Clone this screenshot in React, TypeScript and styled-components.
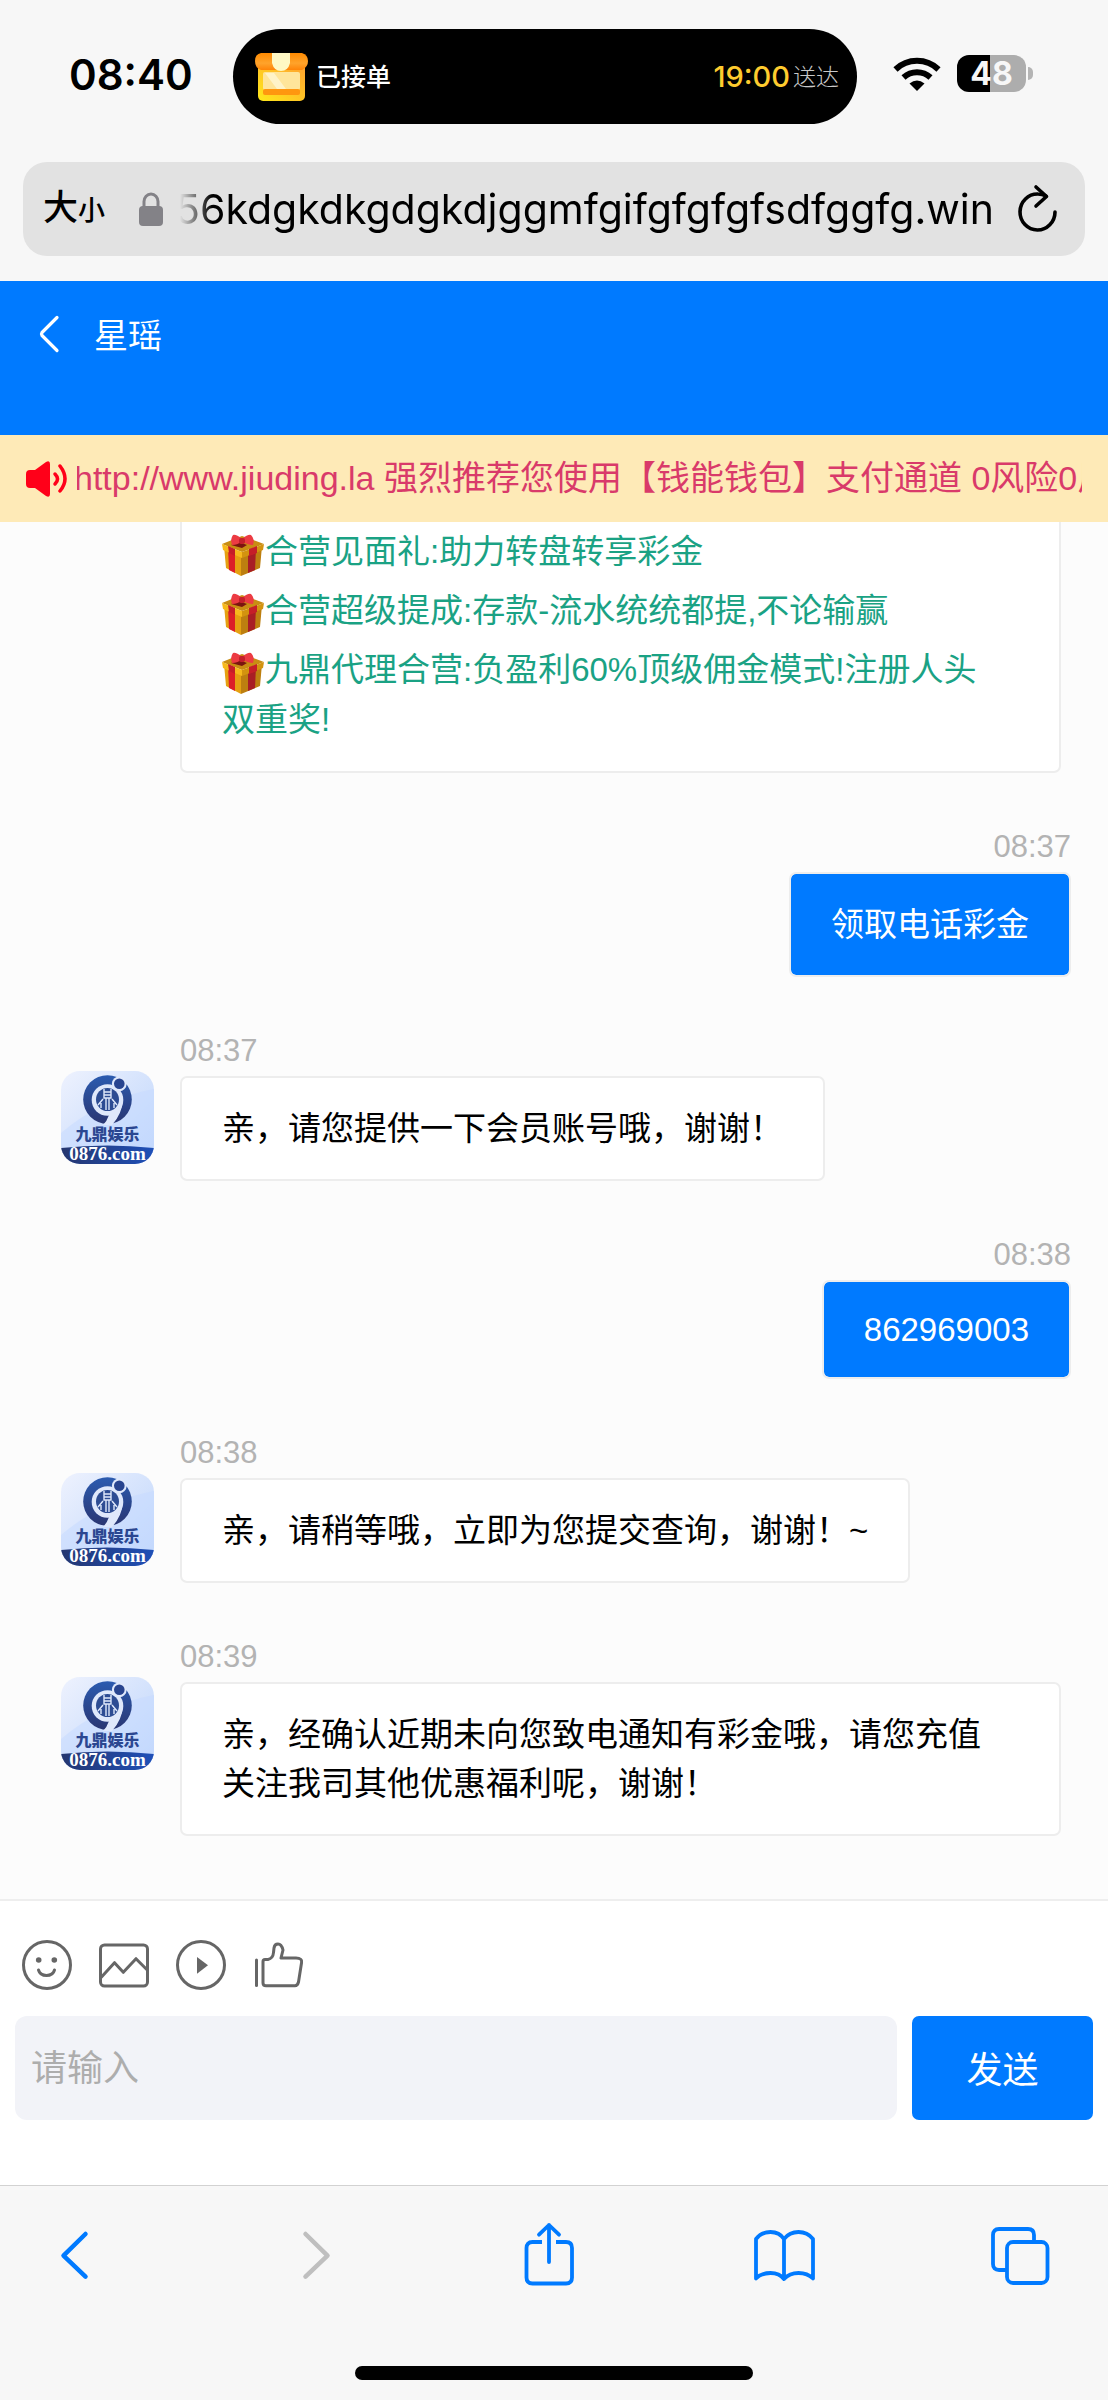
import React from "react";
import styled, { createGlobalStyle } from "styled-components";

const SYSTEM_FONT = `Inter, "Noto Sans CJK SC", sans-serif`;
const CHAT_FONT = `"Liberation Sans", "Noto Sans CJK SC", sans-serif`;
const BLUE = "#007aff";

const GlobalStyle = createGlobalStyle`
  *, *::before, *::after { box-sizing: border-box; }
  body { margin: 0; background: #f7f7f7; font-family: ${CHAT_FONT}; }
  button, input { font: inherit; }
  p { margin: 0; }
`;

const Shell = styled.div`
  display: flex;
  flex-direction: column;
  height: 100vh;
  overflow: hidden;
`;

const BareButton = styled.button`
  display: flex;
  align-items: center;
  padding: 0;
  border: 0;
  background: none;
  color: inherit;
  cursor: pointer;
`;

/* ---------- system chrome ---------- */

const StatusBar = styled.header`
  display: grid;
  grid-template-columns: 233px 1fr 251px;
  align-items: center;
  padding-top: 29px;
  font-family: ${SYSTEM_FONT};
`;

const Clock = styled.time`
  padding: 0 0 3px 69px;
  font-size: 42px;
  font-weight: 600;
  line-height: 48px;
`;

const Island = styled.div`
  display: flex;
  align-items: center;
  height: 95px;
  padding: 0 18px 0 22px;
  border-radius: 48px;
  background: #000;
  color: #fff;
`;

const OrderState = styled.span`
  flex: 1;
  padding-left: 8px;
  font-size: 25px;
  font-weight: 500;
  line-height: 32px;
`;

const Eta = styled.span`
  color: #fecb2e;
  font-size: 29px;
  font-weight: 500;
  line-height: 32px;
`;

const EtaUnit = styled.span`
  padding-left: 3px;
  color: #c8c8c8;
  font-size: 23px;
  font-weight: 300;
  line-height: 32px;
`;

const Indicators = styled.div`
  display: flex;
  align-items: center;
  gap: 16px;
  padding: 0 0 6px 36px;
`;

const BatteryRow = styled.div`
  display: flex;
  align-items: center;
  gap: 2px;
`;

const Battery = styled.div`
  width: 69px;
  height: 37px;
  border-radius: 12px;
  background: linear-gradient(90deg, #000 48%, #adadad 48%);
  color: #f7f7f7;
  font-size: 32px;
  font-weight: 700;
  line-height: 38px;
  text-align: center;
`;

const BatteryCap = styled.div`
  width: 5px;
  height: 13px;
  border-radius: 0 6px 6px 0;
  background: #b4b4b4;
`;

const AddressBar = styled.div`
  display: flex;
  align-items: center;
  height: 94px;
  margin: 38px 23px 25px;
  padding: 0 27px 0 20px;
  border-radius: 24px;
  background: #e2e2e2;
  font-family: ${SYSTEM_FONT};
`;

const TextSize = styled(BareButton)`
  align-items: baseline;
  font-size: 35px;
  font-weight: 500;
  line-height: 48px;

  small {
    font-size: 27px;
  }
`;

const LockIcon = styled.svg`
  flex: none;
  margin: 0 17px 0 34px;
`;

const Address = styled.div`
  display: flex;
  flex: 1;
  justify-content: flex-end;
  min-width: 0;
  overflow: hidden;
  font-size: 41px;
  line-height: 56px;
  white-space: nowrap;
  mask-image: linear-gradient(90deg, transparent, #000 32px);
`;

const Reload = styled(BareButton)`
  margin-left: 24px;
  padding-bottom: 3px;
`;

/* ---------- chat header ---------- */

const ChatHeader = styled.header`
  display: flex;
  align-items: flex-start;
  gap: 34px;
  flex: none;
  height: 154px;
  padding: 29px 38px;
  background: ${BLUE};
  color: #fff;
`;

const BackButton = styled(BareButton)`
  height: 48px;
`;

const Agent = styled.h1`
  margin: 0;
  font-size: 34px;
  font-weight: 400;
  line-height: 52px;
`;

const Notice = styled.div`
  display: flex;
  align-items: center;
  flex: none;
  height: 87px;
  padding: 0 26px;
  background: #feeab7;
`;

const NoticeTrack = styled.div`
  display: flex;
  flex: 1;
  min-width: 0;
  margin-left: 10px;
  overflow: hidden;
`;

const NoticeText = styled.p`
  margin-left: -3px;
  color: #d93a6a;
  font-size: 34px;
  line-height: 51px;
  white-space: nowrap;
`;

/* ---------- conversation ---------- */

const Conversation = styled.main`
  display: flex;
  flex: 1;
  flex-direction: column;
  justify-content: flex-end;
  gap: 56px;
  min-height: 0;
  padding: 0 37px 63px 61px;
  overflow: hidden;
  background: #fcfcfc;
`;

const Row = styled.article<{ $mine?: boolean }>`
  display: flex;
  flex: none;
  gap: 26px;
  justify-content: ${(p) => (p.$mine ? "flex-end" : "flex-start")};
  padding-right: ${(p) => (p.$mine ? 0 : 10)}px;
`;

const AvatarSlot = styled.div`
  flex: none;
  width: 93px;
  padding-top: 38px;

  svg {
    display: block;
  }
`;

const Content = styled.div<{ $mine?: boolean }>`
  display: flex;
  flex: 1;
  flex-direction: column;
  gap: 7px;
  align-items: ${(p) => (p.$mine ? "flex-end" : "flex-start")};
  min-width: 0;
`;

const Stamp = styled.time`
  color: #b3b3b3;
  font-size: 31px;
  line-height: 36px;
`;

const Bubble = styled.div<{ $mine?: boolean; $wide?: boolean; $digits?: boolean }>`
  width: ${(p) => (p.$wide ? "100%" : "auto")};
  padding: 26px 40px;
  border: 2px solid #ededed;
  border-radius: 7px;
  background: ${(p) => (p.$mine ? BLUE : "#fff")};
  background-clip: padding-box;
  color: ${(p) => (p.$mine ? "#fff" : "#000")};
  font-size: 33px;
  line-height: ${(p) => (p.$digits ? 43 : 49)}px;
  white-space: pre-line;
`;

const Offer = styled.p`
  padding-top: 9px;
  color: #1aa284;
  line-height: 50px;

  svg {
    margin: -8px 1px -8px 0;
    vertical-align: -5px;
  }
`;

/* ---------- composer ---------- */

const Composer = styled.form`
  display: flex;
  flex: none;
  flex-direction: column;
  gap: 26px;
  padding: 39px 15px 65px;
  border-top: 2px solid #eee;
  background: #fff;
`;

const Tools = styled.div`
  display: flex;
  gap: 27px;
  padding-left: 7px;
  color: #666;
`;

const InputRow = styled.div`
  display: flex;
  gap: 15px;
  height: 104px;
`;

const MessageInput = styled.input`
  flex: 1;
  min-width: 0;
  padding: 2px 16px 0;
  border: 0;
  border-radius: 12px;
  background: #f2f3f8;
  font-size: 36px;

  &::placeholder {
    color: #adadad;
    opacity: 1;
  }
`;

const SendButton = styled.button`
  width: 181px;
  padding: 0 0 3px;
  border: 0;
  border-radius: 7px;
  background: ${BLUE};
  color: #fff;
  font-size: 36px;
  cursor: pointer;
`;

/* ---------- browser toolbar ---------- */

const BrowserBar = styled.footer`
  flex: none;
  padding: 36px 0 20px;
  border-top: 1px solid #d2d2d2;
  background: #f7f7f7;
`;

const BrowserNav = styled.nav`
  display: flex;
  justify-content: space-between;
  padding: 0 58px 0 44px;
`;

const NavButton = styled(BareButton)<{ $dim?: boolean }>`
  color: ${(p) => (p.$dim ? "#bfbfbf" : BLUE)};

  svg {
    overflow: visible;
  }
`;

const HomeIndicator = styled.div`
  width: 36%;
  height: 14px;
  margin: 80px auto 0;
  border-radius: 7px;
  background: #000;
`;

/* ---------- drawings ---------- */

const StoreIcon = () => (
  <svg width="53" height="48" viewBox="0 0 53 48" aria-hidden="true">
    <defs>
      <linearGradient id="shopBody" x1="0" y1="1" x2="1" y2="0">
        <stop offset="0" stopColor="#ffe81a" />
        <stop offset="1" stopColor="#ffa030" />
      </linearGradient>
      <linearGradient id="shopRoof" x1="0" y1="0" x2="0" y2="1">
        <stop offset="0" stopColor="#ff8a00" />
        <stop offset=".6" stopColor="#ffa32b" />
        <stop offset="1" stopColor="#ff8408" />
      </linearGradient>
    </defs>
    <rect x="3" y="10" width="47" height="38" rx="5" fill="url(#shopBody)" />
    <rect x="8" y="19" width="37" height="18" rx="2" fill="#ffe59a" />
    <path d="M10 20h9l12 16h-9z" fill="#fff3c8" />
    <rect x="8" y="36" width="37" height="6" rx="2" fill="#ff970f" />
    <path d="M6 0h41q6 2 6 8t-6 9H6q-6-2-6-9t6-8z" fill="url(#shopRoof)" />
    <path d="M17 0h18v10q-2 8-9 8t-9-8z" fill="#fff8c4" />
  </svg>
);

const WifiIcon = () => (
  <svg width="48" height="34" viewBox="0 0 48 34" aria-label="Wi-Fi">
    <g fill="none" stroke="#000" strokeWidth="6">
      <path d="M2.500 12.500A31 31 0 0 1 45.500 12.500" />
      <path d="M10.500 20.500A20 20 0 0 1 37.500 20.500" />
    </g>
    <path d="M16.500 26.500Q24 20.500 31.500 26.500L24 34z" fill="#000" />
  </svg>
);

const ReloadIcon = () => (
  <svg width="40" height="48" viewBox="0 0 40 48" fill="none" stroke="#000" strokeWidth="3.600" strokeLinecap="round" strokeLinejoin="round">
    <path d="M28 12Q24 10 20 10A17.500 18 0 1 0 37 28" />
    <path d="M18 3l10.500 9.500-10.500 9.500" />
  </svg>
);

const Chevron = () => (
  <svg width="22" height="38" viewBox="0 0 22 38" fill="none" stroke="#fff" strokeWidth="3.200" strokeLinecap="round" strokeLinejoin="round">
    <path d="M19 2.500L4 17.500Q3 19 4 20.500L19 35.500" />
  </svg>
);

const SpeakerIcon = () => (
  <svg width="41" height="36" viewBox="0 0 41 36" aria-hidden="true">
    <path d="M0 13q0-4 4-4h5L20 1q4-2 4 2v30q0 4-4 2l-11-8H4q-4 0-4-4z" fill="#ff0019" />
    <g fill="none" stroke="#ff0019" strokeWidth="3.500" strokeLinecap="round">
      <path d="M29 13q5 5 0 10" />
      <path d="M34 5q10 13 0 25" />
    </g>
  </svg>
);

const Gift = () => (
  <svg width="42" height="42" viewBox="0 0 42 42" role="img" aria-label="礼物">
    <path d="M2 12l17 7v23L4 34z" fill="#e5a112" />
    <path d="M40 12l-21 7v23l19-8z" fill="#bd7f10" />
    <path d="M6 14l7 3v22l-6-3z" fill="#dc1f28" />
    <path d="M26 17l8-3-1 22-7 3z" fill="#a81e25" />
    <path d="M0 10L20 2l22 8-22 8z" fill="#c98d13" />
    <path d="M0 10l20 8v6L1 16z" fill="#f6b91c" />
    <path d="M42 10l-22 8v6l21-8z" fill="#d3930f" />
    <path d="M6 12l7 3v7l-6-3zM27 15l8-3v7l-8 3z" fill="#c51e28" />
    <path d="M9 11l8-3 8 3-5 3z" fill="#7a1510" />
    <path d="M20 5Q14 0 11 1q-3 4-1 10 6 0 10-4zM20 5q6-5 9-4 4 4 2 10-6 0-11-4z" fill="#ec3b43" />
    <rect x="17" y="4" width="6" height="6" rx="2" fill="#c3202b" />
  </svg>
);

const Avatar = () => (
  <svg width="93" height="93" viewBox="0 0 93 93" role="img" aria-label="九鼎娱乐">
    <defs>
      <linearGradient id="avatarBg" x1="0" y1="0" x2="1" y2="1">
        <stop offset="0" stopColor="#eef2fe" />
        <stop offset="1" stopColor="#bcd4fb" />
      </linearGradient>
      <linearGradient id="avatarRing" x1="0" y1="0" x2="0" y2="1">
        <stop offset="0" stopColor="#2b5bb0" />
        <stop offset="1" stopColor="#2a3672" />
      </linearGradient>
      <linearGradient id="avatarBand" x1="0" y1="0" x2="1" y2="0">
        <stop offset="0" stopColor="#25366f" />
        <stop offset="1" stopColor="#1f50b8" />
      </linearGradient>
      <clipPath id="avatarClip">
        <rect width="93" height="93" rx="19" />
      </clipPath>
    </defs>
    <g clipPath="url(#avatarClip)">
      <rect width="93" height="93" fill="url(#avatarBg)" />
      <path d="M0 62Q40 28 93 18V93H0z" fill="#c6dbff" opacity=".55" />
      <circle cx="46.500" cy="28.500" r="24.300" fill="url(#avatarRing)" />
      <circle cx="46.500" cy="29" r="15.800" fill="#dfe8fb" />
      <path d="M62 29Q61 43 51 54h-9q4-4 6-10 6-3 8-8z" fill="#dfe8fb" />
      <circle cx="46.500" cy="28.500" r="11.500" fill="#2d4c93" />
      <g fill="none" stroke="#dfe8fb" strokeWidth="1.400">
        <path d="M43 18v9h7v-9M43 21h7M43 24h7M45 27v12M48 27v12M37 34l5-6M56 34l-5-6M40 37v-5M53 37v-5" />
      </g>
      <circle cx="58.300" cy="12.800" r="7.400" fill="#dfe8fb" />
      <circle cx="58.300" cy="12.800" r="5.300" fill="#28448f" />
      <text x="46.500" y="69" textAnchor="middle" fontFamily="Noto Sans CJK SC, sans-serif" fontSize="16" fontWeight="900" fill="#2b4791">九鼎娱乐</text>
      <path d="M0 77Q46 72 93 77V93H0z" fill="url(#avatarBand)" />
      <text x="46.500" y="89" textAnchor="middle" fontFamily="Liberation Serif, serif" fontSize="19" fontWeight="700" fill="#fff">0876.com</text>
    </g>
  </svg>
);

const Tool = ({ label, children }: { label: string; children: React.ReactNode }) => (
  <BareButton type="button" aria-label={label}>
    <svg width="50" height="50" viewBox="0 0 50 50" fill="none" stroke="currentColor" strokeWidth="3" strokeLinecap="round" strokeLinejoin="round">
      {children}
    </svg>
  </BareButton>
);

const Nav = ({ label, dim, children }: { label: string; dim?: boolean; children: React.ReactNode }) => (
  <NavButton type="button" aria-label={label} $dim={dim} disabled={dim}>
    <svg width="60" height="64" viewBox="0 0 60 64" fill="none" stroke="currentColor" strokeWidth="3.800" strokeLinecap="round" strokeLinejoin="round">
      {children}
    </svg>
  </NavButton>
);

/* ---------- data ---------- */

type Message = { time: string; text: string; mine?: boolean; wide?: boolean; digits?: boolean };

const offers = [
  "合营见面礼:助力转盘转享彩金",
  "合营超级提成:存款-流水统统都提,不论输赢",
  "九鼎代理合营:负盈利60%顶级佣金模式!注册人头\n双重奖!",
];

const messages: Message[] = [
  { time: "08:37", text: "领取电话彩金", mine: true },
  { time: "08:37", text: "亲，请您提供一下会员账号哦，谢谢！" },
  { time: "08:38", text: "862969003", mine: true, digits: true },
  { time: "08:38", text: "亲，请稍等哦，立即为您提交查询，谢谢！~" },
  { time: "08:39", text: "亲，经确认近期未向您致电通知有彩金哦，请您充值\n关注我司其他优惠福利呢，谢谢！", wide: true },
];

export default function App() {
  return (
    <Shell>
      <GlobalStyle />
      <StatusBar>
        <Clock>08:40</Clock>
        <Island>
          <StoreIcon />
          <OrderState>已接单</OrderState>
          <Eta>19:00</Eta>
          <EtaUnit>送达</EtaUnit>
        </Island>
        <Indicators>
          <WifiIcon />
          <BatteryRow>
            <Battery>48</Battery>
            <BatteryCap />
          </BatteryRow>
        </Indicators>
      </StatusBar>

      <AddressBar>
        <TextSize type="button">
          大<small>小</small>
        </TextSize>
        <LockIcon width="24" height="34" viewBox="0 0 24 34" aria-hidden="true">
          <path d="M5 16V9.500a7 7.500 0 0 1 14 0V16" fill="none" stroke="#838287" strokeWidth="3" />
          <rect y="14" width="24" height="20" rx="4" fill="#838287" />
        </LockIcon>
        <Address>56kdgkdkgdgkdjggmfgifgfgfgfsdfggfg.win</Address>
        <Reload type="button" aria-label="重新载入">
          <ReloadIcon />
        </Reload>
      </AddressBar>

      <ChatHeader>
        <BackButton type="button" aria-label="返回">
          <Chevron />
        </BackButton>
        <Agent>星瑶</Agent>
      </ChatHeader>

      <Notice>
        <SpeakerIcon />
        <NoticeTrack>
          <NoticeText>http://www.jiuding.la 强烈推荐您使用【钱能钱包】支付通道 0风险0风控</NoticeText>
        </NoticeTrack>
      </Notice>

      <Conversation>
        <Row>
          <AvatarSlot />
          <Content>
            <Bubble $wide>
              {offers.map((offer) => (
                <Offer key={offer}>
                  <Gift />
                  {offer}
                </Offer>
              ))}
            </Bubble>
          </Content>
        </Row>
        {messages.map((m) => (
          <Row key={m.time + m.text} $mine={m.mine}>
            {!m.mine && (
              <AvatarSlot>
                <Avatar />
              </AvatarSlot>
            )}
            <Content $mine={m.mine}>
              <Stamp>{m.time}</Stamp>
              <Bubble $mine={m.mine} $wide={m.wide} $digits={m.digits}>
                {m.text}
              </Bubble>
            </Content>
          </Row>
        ))}
      </Conversation>

      <Composer onSubmit={(e) => e.preventDefault()}>
        <Tools>
          <Tool label="表情">
            <circle cx="25" cy="25" r="23.500" />
            <g fill="currentColor" stroke="none">
              <circle cx="16.700" cy="20" r="2.800" />
              <circle cx="32.300" cy="20" r="2.800" />
            </g>
            <path d="M16.500 30Q18 35.500 24.500 35.500T32.500 30" />
          </Tool>
          <Tool label="图片">
            <rect x="1.500" y="5" width="47" height="41" rx="4" />
            <path d="M2.500 37L15.500 22.700 24.300 32.300 37 18.700 47.500 29.300" />
          </Tool>
          <Tool label="视频">
            <circle cx="25" cy="25" r="23.500" />
            <path d="M21 17l11 8.300-11 8.400z" fill="currentColor" stroke="none" />
          </Tool>
          <Tool label="评价">
            <path d="M3.500 20v25.500" />
            <path d="M12 19.500H15Q20 18.500 20.500 12.500L21 8Q21.500 4 25 4T30 10L28 18H43Q49.500 18 48.500 23L45.500 42Q44.500 45.700 42 45.700H13Q10 45.700 10 43V21.500Q10 19.500 12 19.500z" />
          </Tool>
        </Tools>
        <InputRow>
          <MessageInput type="text" placeholder="请输入" aria-label="请输入" />
          <SendButton type="submit">发送</SendButton>
        </InputRow>
      </Composer>

      <BrowserBar>
        <BrowserNav>
          <Nav label="后退">
            <path d="M41.500 12L19.500 33.600 41.500 54.700" strokeWidth="4.500" />
          </Nav>
          <Nav label="前进" dim>
            <path d="M24.500 12L46.500 33.600 24.500 54.700" strokeWidth="4.500" />
          </Nav>
          <Nav label="分享">
            <path d="M25 20H15.500Q9.500 20 9.500 26V55.500Q9.500 61.500 15.500 61.500H49Q55 61.500 55 55.500V26Q55 20 49 20H39" strokeLinecap="butt" />
            <path d="M32 3V40M22 12.700L32 3 42 12.700" />
          </Nav>
          <Nav label="书签">
            <path d="M30 17V57M30 17Q25.500 10 16.500 10T2 17V56.500Q7.500 51 16.500 51T30 57Q35.500 51 44.500 51T59 56.500V17Q53.500 10 44.500 10T30 17z" />
          </Nav>
          <Nav label="标签页">
            <rect x="17" y="20" width="40.500" height="41" rx="6" />
            <path d="M16 48H9Q3 48 3 42V13Q3 7 9 7H38Q44 7 44 13V19" strokeLinecap="butt" />
          </Nav>
        </BrowserNav>
        <HomeIndicator />
      </BrowserBar>
    </Shell>
  );
}
